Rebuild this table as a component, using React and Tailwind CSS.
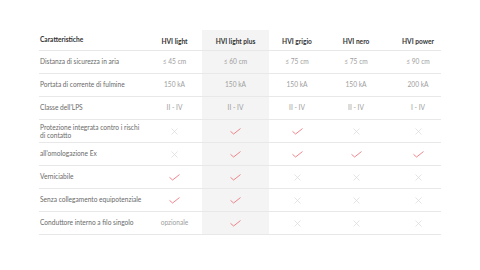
import React from "react";

const Check = () => (
  <svg width="11" height="7" viewBox="0 0 11 7" fill="none">
    <path d="M0.8 3.6 L3.6 6 L10.2 0.8" stroke="#ec6870" strokeWidth="0.8" strokeLinecap="round" strokeLinejoin="round" />
  </svg>
);
const Cross = () => (
  <svg width="7" height="7" viewBox="0 0 7 7" fill="none">
    <path d="M0.8 0.8 L6.2 6.2 M6.2 0.8 L0.8 6.2" stroke="#d8d8d8" strokeWidth="0.7" strokeLinecap="round" />
  </svg>
);

const rows = [
  ["Distanza di sicurezza in aria", "≤ 45 cm", "≤ 60 cm", "≤ 75 cm", "≤ 75 cm", "≤ 90 cm"],
  ["Portata di corrente di fulmine", "150 kA", "150 kA", "150 kA", "150 kA", "200 kA"],
  ["Classe dell'LPS", "II - IV", "II - IV", "II - IV", "II - IV", "I - IV"],
  [["Protezione integrata contro i rischi", "di contatto"], "x", "v", "v", "x", "x"],
  ["all'omologazione Ex", "x", "v", "v", "v", "v"],
  ["Verniciabile", "v", "v", "x", "x", "x"],
  ["Senza collegamento equipotenziale", "v", "v", "x", "x", "x"],
  ["Conduttore interno a filo singolo", "opzionale", "v", "x", "x", "x"],
];

const colCls = [
  "w-[108px] justify-start pl-[1px]",
  "w-[55px] justify-center",
  "w-[67px] justify-center bg-[#f4f4f4]",
  "w-[56px] justify-center",
  "w-[62px] justify-center",
  "w-[54px] justify-center pl-[8px]",
];

const Cell = ({ v, i }) => {
  let content;
  if (i === 0) {
    content = Array.isArray(v) ? (
      <span className="leading-[8.5px]">{v[0]}<br />{v[1]}</span>
    ) : (
      <span>{v}</span>
    );
  } else if (v === "v") content = <Check />;
  else if (v === "x") content = <Cross />;
  else content = <span className="text-[#9e9e9e]">{v}</span>;
  return <div className={`flex items-center h-full ${colCls[i]}`}>{content}</div>;
};

export default function App() {
  return (
    <div className="w-[480px] h-[270px] bg-white pt-[30px] pl-[39px]" style={{ fontFamily: "Lato, 'Open Sans', sans-serif" }}>
      <div className="w-[402px] text-[6.6px] text-[#6a6a6a] font-normal">
        <div className="flex h-[21px] border-b border-[#e8e8e8] font-bold text-[#333333]">
          {["Caratteristiche", "HVI light", "HVI light plus", "HVI grigio", "HVI nero", "HVI power"].map((h, i) => (
            <div key={i} className={`flex items-center h-full ${colCls[i]} ${i > 0 ? "pt-[3px]" : ""}`}>{h}</div>
          ))}
        </div>
        {rows.map((r, ri) => (
          <div key={ri} className="flex h-[23px] border-b border-[#e8e8e8]">
            {r.map((v, i) => (
              <Cell key={i} v={v} i={i} />
            ))}
          </div>
        ))}
      </div>
    </div>
  );
}
